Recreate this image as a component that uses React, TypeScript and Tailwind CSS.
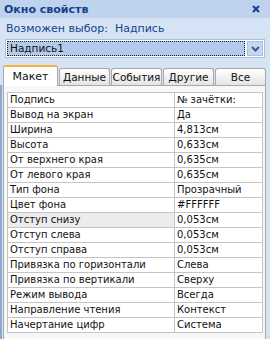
const rows: [string, string][] = [
  ['Подпись', '№ зачётки:'],
  ['Вывод на экран', 'Да'],
  ['Ширина', '4,813см'],
  ['Высота', '0,633см'],
  ['От верхнего края', '0,635см'],
  ['От левого края', '0,635см'],
  ['Тип фона', 'Прозрачный'],
  ['Цвет фона', '#FFFFFF'],
  ['Отступ снизу', '0,053см'],
  ['Отступ слева', '0,053см'],
  ['Отступ справа', '0,053см'],
  ['Привязка по горизонтали', 'Слева'],
  ['Привязка по вертикали', 'Сверху'],
  ['Режим вывода', 'Всегда'],
  ['Направление чтения', 'Контекст'],
  ['Начертание цифр', 'Система'],
];

const tabs = ['Макет', 'Данные', 'События', 'Другие', 'Все'];

export default function App() {
  return (
    <div className="w-[270px] h-[339px] overflow-hidden bg-[#d5e3f5] text-[10px] leading-none text-[#111] [font-family:'DejaVu_Sans',sans-serif]">
      {/* Title bar */}
      <div className="h-[18px] bg-[#bfd3ef] flex items-center justify-between pl-[4px] pr-[10px]">
        <span className="font-bold text-[11px] text-[#15428b]">Окно свойств</span>
        <svg width="8" height="8" viewBox="0 0 8 8">
          <path d="M1 1 L7 7 M7 1 L1 7" stroke="#15428b" strokeWidth="2" />
        </svg>
      </div>

      {/* Selection info */}
      <div className="h-[18px] flex items-center pl-[6px] pt-[2px] text-[11px] text-[#15428b]">
        Возможен выбор:&nbsp; Надпись
      </div>

      {/* Combo box */}
      <div className="mx-[5px] mt-[3px] h-[19px] bg-white border border-[#a9bfd6] flex items-center p-[1px]">
        <div className="flex-1 h-full bg-[#b3caec] border border-dotted border-[#222] flex items-center pl-[2px] text-[10.5px]">
          Надпись1
        </div>
        <div className="w-[16px] h-[15px] ml-[2px] bg-[#c4d8f4] border border-[#a9c1e6] flex items-center justify-center">
          <svg width="9" height="6" viewBox="0 0 9 6">
            <path d="M1 1 L4.5 4.5 L8 1" stroke="#3a5a8c" strokeWidth="2" fill="none" />
          </svg>
        </div>
      </div>

      {/* Tabs */}
      <div className="flex items-end h-[21px] mt-[6px] pl-[3px] pr-[4px] gap-[1px]">
        {tabs.map((t, i) =>
          i === 0 ? (
            <div
              key={t}
              className="w-[55px] h-[21px] bg-white border-t-2 border-x border-t-[#f5b23c] border-x-[#a8a8a8] rounded-t-[3px] flex items-center justify-center relative top-[1px] text-[11px]"
            >
              {t}
            </div>
          ) : (
            <div
              key={t}
              className="flex-1 h-[17px] bg-gradient-to-b from-white to-[#e4e4e4] border-t border-x border-[#a8a8a8] rounded-t-[3px] flex items-center justify-center text-[10.5px]"
            >
              {t}
            </div>
          )
        )}
      </div>

      {/* Panel */}
      <div className="flex h-[260px]">
        <div className="w-[2px] bg-[#8ba8d2]" />
        <div className="ml-[1px] w-[263px] bg-[#f7f7f7] border border-[#a8a8a8] pt-[6px] pl-[3px]">
          <div className="w-[256px] border-t border-l border-[#c4c4c4] bg-white">
            {rows.map(([k, v], i) => (
              <div key={k} className="grid grid-cols-[167px_1fr] h-[15px]">
                <div
                  className={`border-r border-b border-[#c4c4c4] flex items-center pl-[2px] whitespace-nowrap overflow-hidden ${
                    i === 8 ? 'bg-[#ececec]' : ''
                  }`}
                >
                  {k}
                </div>
                <div className="border-r border-b border-[#c4c4c4] flex items-center pl-[2px] whitespace-nowrap overflow-hidden">
                  {v}
                </div>
              </div>
            ))}
          </div>
        </div>
      </div>
    </div>
  );
}
